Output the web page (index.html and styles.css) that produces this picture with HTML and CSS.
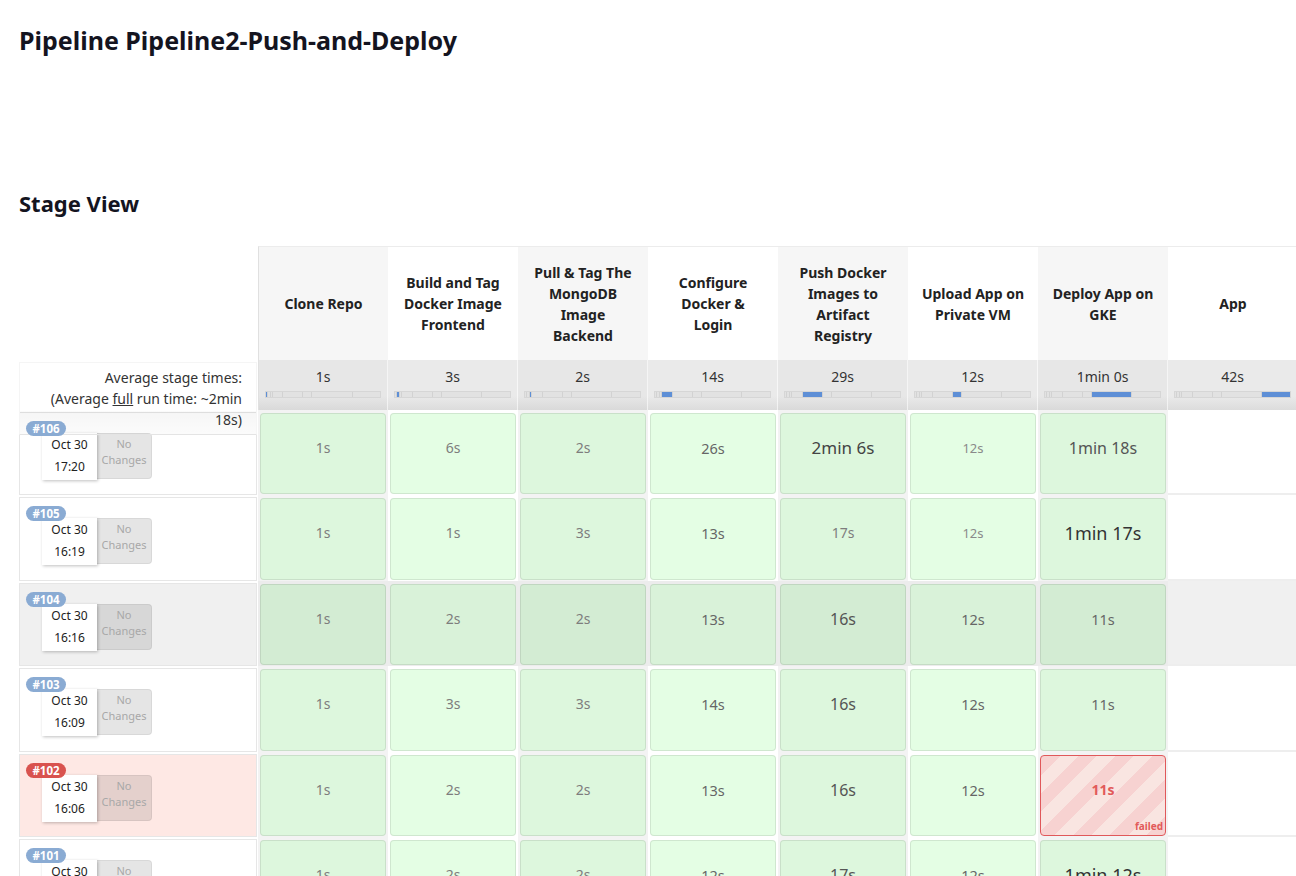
FILE: index.html
```html
<!DOCTYPE html>
<html lang="en">
<head>
<meta charset="utf-8">
<title>Pipeline Pipeline2-Push-and-Deploy</title>
<link rel="stylesheet" href="styles.css">
</head>
<body>
<div class="page">
  <h1 class="title">Pipeline Pipeline2-Push-and-Deploy</h1>
  <h2 class="section">Stage View</h2>

  <div class="stage-view">
    <div class="col-left">
      <div class="left-head"></div>
      <div class="left-avg">
        <div class="avg-label">Average stage times:<br>(Average <u>full</u> run time: ~2min<br>18s)</div>
      </div>
      <div class="run"><div class="run-box"><span class="badge">#106</span><div class="date"><div>Oct 30</div><div>17:20</div></div><div class="changes">No<br>Changes</div></div></div>
      <div class="run"><div class="run-box"><span class="badge">#105</span><div class="date"><div>Oct 30</div><div>16:19</div></div><div class="changes">No<br>Changes</div></div></div>
      <div class="run hl"><div class="run-box"><span class="badge">#104</span><div class="date"><div>Oct 30</div><div>16:16</div></div><div class="changes">No<br>Changes</div></div></div>
      <div class="run"><div class="run-box"><span class="badge">#103</span><div class="date"><div>Oct 30</div><div>16:09</div></div><div class="changes">No<br>Changes</div></div></div>
      <div class="run failed"><div class="run-box"><span class="badge red">#102</span><div class="date"><div>Oct 30</div><div>16:06</div></div><div class="changes">No<br>Changes</div></div></div>
      <div class="run"><div class="run-box"><span class="badge">#101</span><div class="date"><div>Oct 30</div><div>16:01</div></div><div class="changes">No<br>Changes</div></div></div>
    </div>

    <!-- Clone Repo -->
    <div class="col alt first">
      <div class="head">Clone Repo</div>
      <div class="avg"><div class="avg-time">1s</div>
        <div class="bar"><span class="seg on" style="flex-grow:1"></span><span class="seg" style="flex-grow:3"></span><span class="seg" style="flex-grow:2"></span><span class="seg" style="flex-grow:14"></span><span class="seg" style="flex-grow:29"></span><span class="seg" style="flex-grow:12"></span><span class="seg" style="flex-grow:60"></span><span class="seg" style="flex-grow:42"></span></div></div>
      <div class="slot"><div class="cell"><span class="dur d2">1s</span></div></div>
      <div class="slot"><div class="cell"><span class="dur d2">1s</span></div></div>
      <div class="slot hl"><div class="cell"><span class="dur d2">1s</span></div></div>
      <div class="slot"><div class="cell"><span class="dur d2">1s</span></div></div>
      <div class="slot"><div class="cell"><span class="dur d2">1s</span></div></div>
      <div class="slot"><div class="cell"><span class="dur d2">1s</span></div></div>
    </div>

    <!-- Build and Tag -->
    <div class="col">
      <div class="head">Build and Tag<br>Docker Image<br>Frontend</div>
      <div class="avg"><div class="avg-time">3s</div>
        <div class="bar"><span class="seg" style="flex-grow:1"></span><span class="seg on" style="flex-grow:3"></span><span class="seg" style="flex-grow:2"></span><span class="seg" style="flex-grow:14"></span><span class="seg" style="flex-grow:29"></span><span class="seg" style="flex-grow:12"></span><span class="seg" style="flex-grow:60"></span><span class="seg" style="flex-grow:42"></span></div></div>
      <div class="slot"><div class="cell"><span class="dur d2">6s</span></div></div>
      <div class="slot"><div class="cell"><span class="dur d2">1s</span></div></div>
      <div class="slot hl"><div class="cell"><span class="dur d2">2s</span></div></div>
      <div class="slot"><div class="cell"><span class="dur d2">3s</span></div></div>
      <div class="slot"><div class="cell"><span class="dur d2">2s</span></div></div>
      <div class="slot"><div class="cell"><span class="dur d2">2s</span></div></div>
    </div>

    <!-- Pull & Tag -->
    <div class="col alt">
      <div class="head">Pull &amp; Tag The<br>MongoDB<br>Image<br>Backend</div>
      <div class="avg"><div class="avg-time">2s</div>
        <div class="bar"><span class="seg" style="flex-grow:1"></span><span class="seg" style="flex-grow:3"></span><span class="seg on" style="flex-grow:2"></span><span class="seg" style="flex-grow:14"></span><span class="seg" style="flex-grow:29"></span><span class="seg" style="flex-grow:12"></span><span class="seg" style="flex-grow:60"></span><span class="seg" style="flex-grow:42"></span></div></div>
      <div class="slot"><div class="cell"><span class="dur d2">2s</span></div></div>
      <div class="slot"><div class="cell"><span class="dur d2">3s</span></div></div>
      <div class="slot hl"><div class="cell"><span class="dur d2">2s</span></div></div>
      <div class="slot"><div class="cell"><span class="dur d2">3s</span></div></div>
      <div class="slot"><div class="cell"><span class="dur d2">2s</span></div></div>
      <div class="slot"><div class="cell"><span class="dur d2">2s</span></div></div>
    </div>

    <!-- Configure Docker -->
    <div class="col">
      <div class="head">Configure<br>Docker &amp;<br>Login</div>
      <div class="avg"><div class="avg-time">14s</div>
        <div class="bar"><span class="seg" style="flex-grow:1"></span><span class="seg" style="flex-grow:3"></span><span class="seg" style="flex-grow:2"></span><span class="seg on" style="flex-grow:14"></span><span class="seg" style="flex-grow:29"></span><span class="seg" style="flex-grow:12"></span><span class="seg" style="flex-grow:60"></span><span class="seg" style="flex-grow:42"></span></div></div>
      <div class="slot"><div class="cell"><span class="dur d3">26s</span></div></div>
      <div class="slot"><div class="cell"><span class="dur d3">13s</span></div></div>
      <div class="slot hl"><div class="cell"><span class="dur d3">13s</span></div></div>
      <div class="slot"><div class="cell"><span class="dur d3">14s</span></div></div>
      <div class="slot"><div class="cell"><span class="dur d3">13s</span></div></div>
      <div class="slot"><div class="cell"><span class="dur d3">12s</span></div></div>
    </div>

    <!-- Push Docker Images -->
    <div class="col alt">
      <div class="head">Push Docker<br>Images to<br>Artifact<br>Registry</div>
      <div class="avg"><div class="avg-time">29s</div>
        <div class="bar"><span class="seg" style="flex-grow:1"></span><span class="seg" style="flex-grow:3"></span><span class="seg" style="flex-grow:2"></span><span class="seg" style="flex-grow:14"></span><span class="seg on" style="flex-grow:29"></span><span class="seg" style="flex-grow:12"></span><span class="seg" style="flex-grow:60"></span><span class="seg" style="flex-grow:42"></span></div></div>
      <div class="slot"><div class="cell"><span class="dur d5">2min 6s</span></div></div>
      <div class="slot"><div class="cell"><span class="dur d2">17s</span></div></div>
      <div class="slot hl"><div class="cell"><span class="dur d4">16s</span></div></div>
      <div class="slot"><div class="cell"><span class="dur d4">16s</span></div></div>
      <div class="slot"><div class="cell"><span class="dur d4">16s</span></div></div>
      <div class="slot"><div class="cell"><span class="dur d4">17s</span></div></div>
    </div>

    <!-- Upload App -->
    <div class="col">
      <div class="head">Upload App on<br>Private VM</div>
      <div class="avg"><div class="avg-time">12s</div>
        <div class="bar"><span class="seg" style="flex-grow:1"></span><span class="seg" style="flex-grow:3"></span><span class="seg" style="flex-grow:2"></span><span class="seg" style="flex-grow:14"></span><span class="seg" style="flex-grow:29"></span><span class="seg on" style="flex-grow:12"></span><span class="seg" style="flex-grow:60"></span><span class="seg" style="flex-grow:42"></span></div></div>
      <div class="slot"><div class="cell"><span class="dur d1">12s</span></div></div>
      <div class="slot"><div class="cell"><span class="dur d1">12s</span></div></div>
      <div class="slot hl"><div class="cell"><span class="dur d3">12s</span></div></div>
      <div class="slot"><div class="cell"><span class="dur d3">12s</span></div></div>
      <div class="slot"><div class="cell"><span class="dur d3">12s</span></div></div>
      <div class="slot"><div class="cell"><span class="dur d3">12s</span></div></div>
    </div>

    <!-- Deploy App on GKE -->
    <div class="col alt">
      <div class="head">Deploy App on<br>GKE</div>
      <div class="avg"><div class="avg-time">1min 0s</div>
        <div class="bar"><span class="seg" style="flex-grow:1"></span><span class="seg" style="flex-grow:3"></span><span class="seg" style="flex-grow:2"></span><span class="seg" style="flex-grow:14"></span><span class="seg" style="flex-grow:29"></span><span class="seg" style="flex-grow:12"></span><span class="seg on" style="flex-grow:60"></span><span class="seg" style="flex-grow:42"></span></div></div>
      <div class="slot"><div class="cell"><span class="dur d4">1min 18s</span></div></div>
      <div class="slot"><div class="cell"><span class="dur d6">1min 17s</span></div></div>
      <div class="slot hl"><div class="cell"><span class="dur d3">11s</span></div></div>
      <div class="slot"><div class="cell"><span class="dur d3">11s</span></div></div>
      <div class="slot"><div class="cell fail"><span class="dur fail-time">11s</span><span class="fail-label">failed</span></div></div>
      <div class="slot"><div class="cell"><span class="dur d6">1min 12s</span></div></div>
    </div>

    <!-- App -->
    <div class="col">
      <div class="head">App</div>
      <div class="avg"><div class="avg-time">42s</div>
        <div class="bar"><span class="seg" style="flex-grow:1"></span><span class="seg" style="flex-grow:3"></span><span class="seg" style="flex-grow:2"></span><span class="seg" style="flex-grow:14"></span><span class="seg" style="flex-grow:29"></span><span class="seg" style="flex-grow:12"></span><span class="seg" style="flex-grow:60"></span><span class="seg on" style="flex-grow:42"></span></div></div>
      <div class="slot empty"></div>
      <div class="slot empty"></div>
      <div class="slot empty hl"></div>
      <div class="slot empty"></div>
      <div class="slot empty"></div>
      <div class="slot empty"></div>
    </div>
  </div>
</div>
</body>
</html>
```

FILE: styles.css
```css
html, body {
  margin: 0;
  padding: 0;
  background: #ffffff;
}

body {
  font-family: "Noto Sans", "Open Sans", sans-serif;
  color: #333333;
  width: 1296px;
  height: 876px;
  overflow: hidden;
}

.page {
  padding-left: 19px;
}

.title {
  margin: 0;
  padding-top: 23px;
  font-size: 25px;
  line-height: 34px;
  font-weight: 700;
  color: #14141f;
}

.section {
  margin: 132px 0 29px;
  font-size: 22px;
  line-height: 28px;
  font-weight: 700;
  color: #14141f;
}

.stage-view {
  display: flex;
  align-items: flex-start;
}

/* ---------- left column ---------- */
.col-left {
  width: 239px;
  flex-shrink: 0;
}

.left-head {
  height: 114px;
}

.left-avg {
  height: 50px;
  position: relative;
  z-index: 1;
}

.avg-label {
  height: 73px;
  box-sizing: border-box;
  margin-top: 2px;
  margin-right: 1px;
  padding: 4px 14px 0 0;
  text-align: right;
  font-size: 14px;
  line-height: 21px;
  color: #333;
  border: 1px solid #f5f5f5;
  border-bottom-color: #e4e4e4;
  background: linear-gradient(to bottom, rgba(0,0,0,0) 0, rgba(0,0,0,0) 48px, rgba(0,0,0,0.035) 49px, rgba(0,0,0,0.015) 100%);
}

.run {
  height: 85.4px;
  box-sizing: border-box;
  padding: 0 1px 2px 0;
}

.run-box {
  position: relative;
  height: 100%;
  box-sizing: border-box;
  border: 1px solid #e6e6e6;
  background: #ffffff;
  display: flex;
  align-items: flex-start;
  padding: 20px 0 0 22px;
}

.run.hl .run-box {
  background: #f0f0f0;
}

.run.failed .run-box {
  background: #fee8e4;
}

.badge {
  position: absolute;
  z-index: 2;
  left: 6px;
  top: 8px;
  width: 40px;
  height: 15px;
  border-radius: 8px;
  background: #8aabd3;
  color: #ffffff;
  font-size: 11.5px;
  font-weight: 700;
  line-height: 15px;
  text-align: center;
}

.badge.red {
  background: #d9534f;
}

.date {
  width: 55px;
  height: 47px;
  box-sizing: border-box;
  background: #ffffff;
  box-shadow: 1px 1px 3px rgba(0,0,0,0.25);
  font-size: 12px;
  line-height: 22px;
  padding-top: 1px;
  text-align: center;
  color: #222;
}

.changes {
  width: 55px;
  height: 46px;
  box-sizing: border-box;
  background: rgba(0,0,0,0.1);
  border: 1px solid rgba(0,0,0,0.06);
  border-left: none;
  border-radius: 0 4px 4px 0;
  font-size: 11px;
  line-height: 16px;
  padding-top: 2px;
  text-align: center;
  color: #a8a8a8;
}

/* ---------- stage columns ---------- */
.col {
  width: 130px;
  flex-shrink: 0;
  background: #ffffff;
}

.col.alt {
  background: #f3f3f3;
}

.head {
  height: 114px;
  box-sizing: border-box;
  border-top: 1px solid #ececec;
  display: flex;
  align-items: center;
  justify-content: center;
  text-align: center;
  font-size: 14px;
  line-height: 21px;
  font-weight: 700;
  color: #222;
  background: #ffffff;
}

.col.alt .head {
  background: #f6f6f6;
}

.col.first .head,
.col.first .avg {
  border-left: 1px solid #e0e0e0;
}

.avg {
  height: 50px;
  box-sizing: border-box;
  padding: 7px 6px 0;
  background: linear-gradient(to bottom, #eaeaea 0, #eaeaea 72%, #dcdcdc 100%);
  border-right: 1px solid rgba(255,255,255,0.6);
}

.col.alt .avg {
  background: linear-gradient(to bottom, #e7e7e7 0, #e7e7e7 72%, #d9d9d9 100%);
}

.avg-time {
  text-align: center;
  font-size: 14px;
  line-height: 20px;
  color: #333;
}

.bar {
  display: flex;
  height: 7px;
  margin-top: 4px;
  box-sizing: border-box;
  border: 1px solid #d6d6d6;
  background: #e2e2e2;
}

.seg {
  flex-basis: 0;
  min-width: 1px;
  border-right: 1px solid #d2d2d2;
}

.seg:last-child {
  border-right: none;
}

.seg.on {
  background: #5e8fd6;
}

.slot {
  height: 85.4px;
  box-sizing: border-box;
  padding: 3px 2px 1px;
}

.slot.hl {
  background: #ececec;
}

.slot.empty {
  border-bottom: 2px solid #eeeeee;
  padding: 0;
}

.slot.empty.hl {
  background: #f0f0f0;
}

.cell {
  position: relative;
  height: 100%;
  box-sizing: border-box;
  border: 1px solid rgba(0,0,0,0.09);
  border-radius: 4px;
  background: #e4fee4;
  text-align: center;
}

.col.alt .cell {
  background: #ddf7dd;
}

.slot.hl .cell {
  background: #d9f2d9;
}

.col.alt .slot.hl .cell {
  background: #d3ecd3;
}

.dur {
  display: block;
  margin-top: 22px;
  line-height: 24px;
}

.d1 { font-size: 13px; color: #8a8a8a; }
.d2 { font-size: 14px; color: #7d7d7d; }
.d3 { font-size: 14.5px; color: #666; }
.d4 { font-size: 16px; color: #555; }
.d5 { font-size: 17px; color: #444; }
.d6 { font-size: 18px; color: #333; }

.col.alt .cell.fail,
.cell.fail {
  border: 1px solid #e0585a;
  background: repeating-linear-gradient(-45deg, #f7d2d1 0, #f7d2d1 13px, #f9e5e1 13px, #f9e5e1 26px);
}

.fail-time {
  font-size: 14px;
  font-weight: 700;
  color: #e25a5a;
}

.fail-label {
  position: absolute;
  right: 2px;
  bottom: 3px;
  font-size: 10px;
  line-height: 12px;
  font-weight: 700;
  color: #e25a5a;
}
```
